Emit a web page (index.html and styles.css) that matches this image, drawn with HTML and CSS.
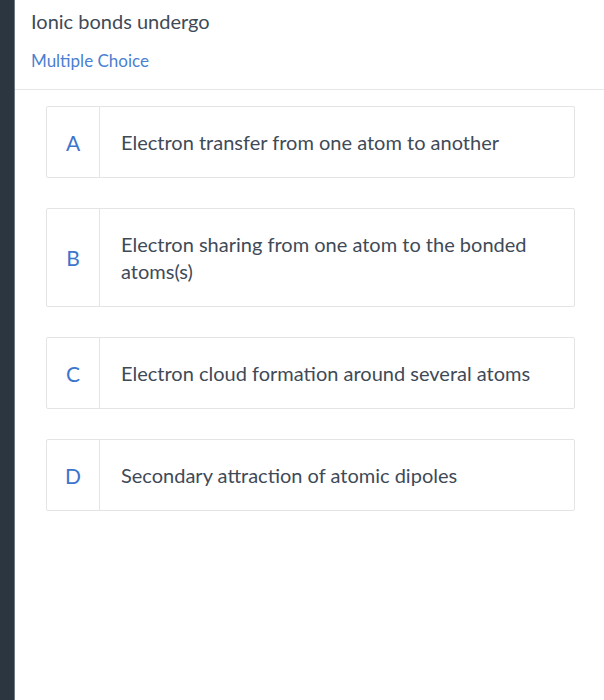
FILE: index.html
```html
<!DOCTYPE html>
<html>
<head>
<meta charset="utf-8">
<link rel="stylesheet" href="styles.css">
</head>
<body>
<div class="layout">
  <aside class="sidebar"></aside>
  <main class="content">
    <header class="question">
      <h1 class="title">Ionic bonds undergo</h1>
      <div class="type">Multiple Choice</div>
    </header>
    <div class="options">
      <div class="option"><div class="letter">A</div><div class="text">Electron transfer from one atom to another</div></div>
      <div class="option"><div class="letter">B</div><div class="text">Electron sharing from one atom to the bonded atoms(s)</div></div>
      <div class="option"><div class="letter">C</div><div class="text">Electron cloud formation around several atoms</div></div>
      <div class="option"><div class="letter">D</div><div class="text">Secondary attraction of atomic dipoles</div></div>
    </div>
  </main>
</div>
</body>
</html>
```
FILE: styles.css
```css
html, body {
  margin: 0;
  padding: 0;
  background: #ffffff;
}
body {
  font-family: "Lato", "Open Sans", sans-serif;
  color: #3f4a57;
}
.layout {
  display: flex;
  min-height: 700px;
}
.sidebar {
  width: 15px;
  flex: 0 0 15px;
  background: #2b3640;
  border-right: 1px solid #6f7780;
  box-sizing: border-box;
}
.content {
  flex: 1;
}
.question {
  padding: 7px 16px 17px 16px;
  border-bottom: 1px solid #e4e6e8;
}
.title {
  margin: 0;
  font-size: 20px;
  font-weight: 400;
  line-height: 28px;
  color: #3f4a57;
}
.type {
  margin-top: 15px;
  font-size: 17px;
  line-height: 22px;
  color: #4a7fd1;
}
.options {
  padding: 16px 29px 0 31px;
  display: flex;
  flex-direction: column;
  gap: 30px;
}
.option {
  display: flex;
  border: 1px solid #e2e4e6;
  border-radius: 2px;
}
.letter {
  width: 52px;
  flex: 0 0 52px;
  border-right: 1px solid #e2e4e6;
  display: flex;
  align-items: center;
  justify-content: center;
  font-size: 21px;
  color: #3d74cc;
}
.text {
  padding: 22px 20px 21px 21px;
  font-size: 20px;
  line-height: 27px;
  color: #3f4a57;
}
```
